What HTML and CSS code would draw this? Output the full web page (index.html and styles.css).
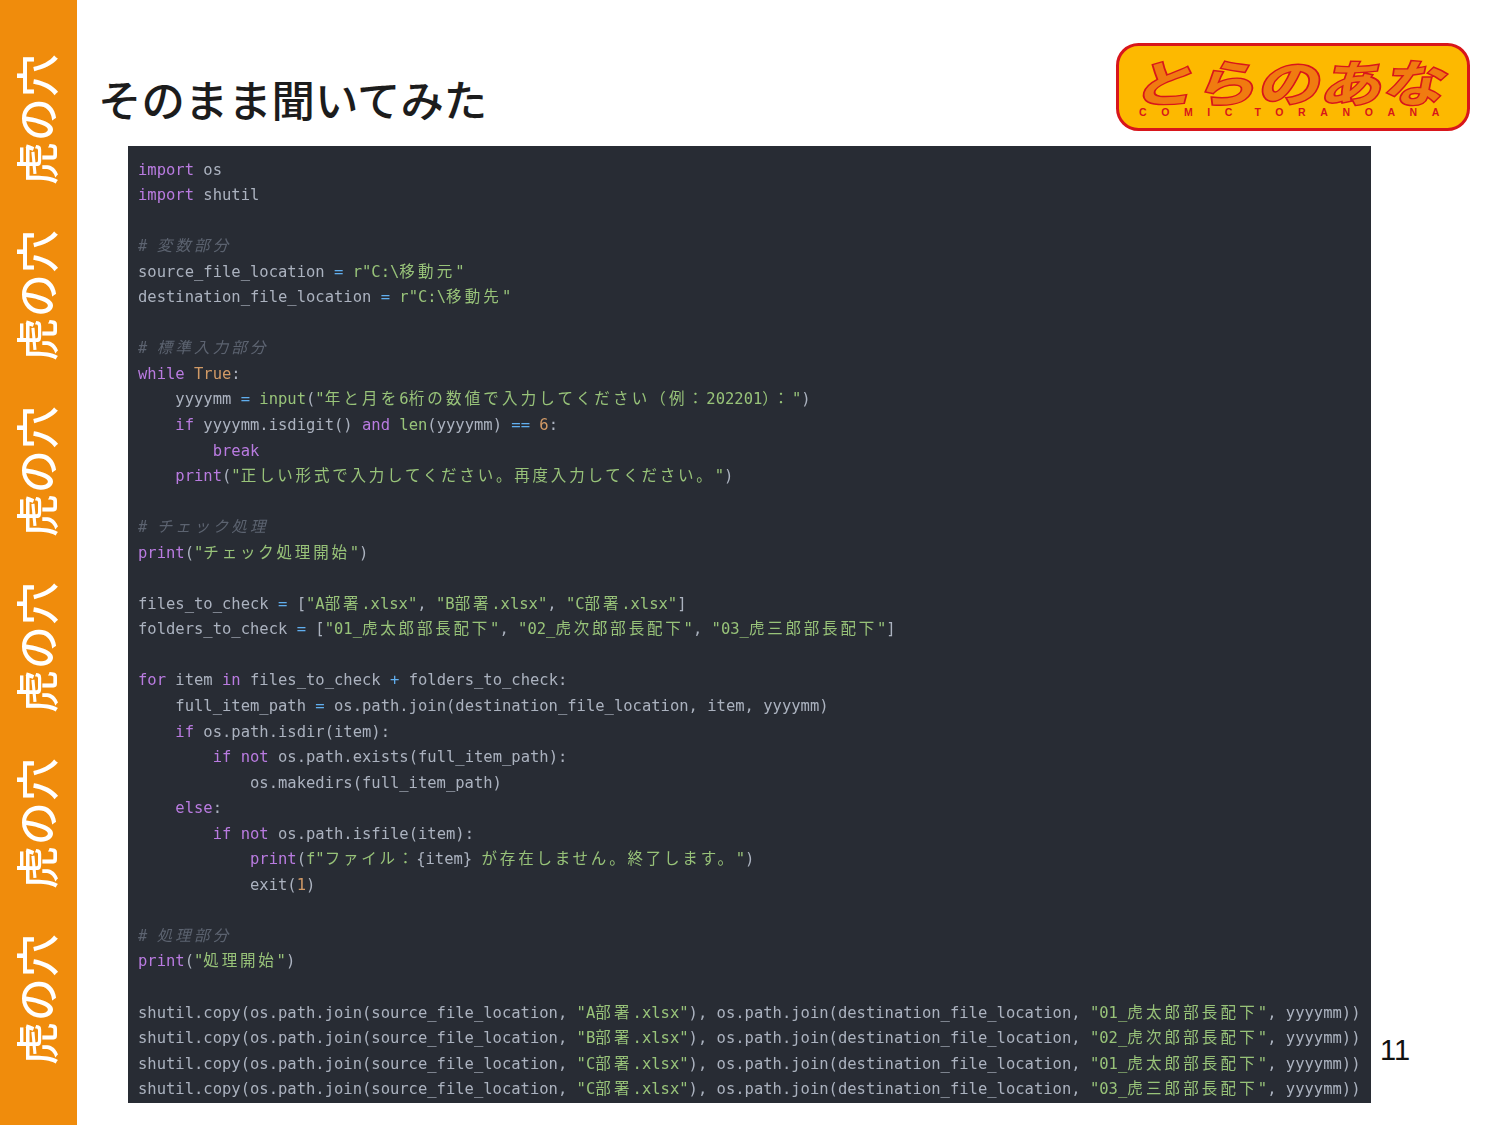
FILE: index.html
```html
<!DOCTYPE html>
<html lang="ja">
<head>
<meta charset="utf-8">
<title>そのまま聞いてみた</title>
<link rel="stylesheet" href="styles.css">
</head>
<body>
<div class="slide">
  <aside class="band">虎の穴　虎の穴　虎の穴　虎の穴　虎の穴　虎の穴</aside>
  <main class="main">
    <header class="head">
      <h1 class="title">そのまま聞いてみた</h1>
      <svg class="logo" viewBox="0 0 354 88" width="354" height="88" role="img" aria-label="とらのあな COMIC TORANOANA">
        <rect class="logo-bg" x="1.5" y="1.5" width="351" height="85" rx="21"/>
        <g transform="translate(10 0) skewX(-14)">
          <text class="logo-main" x="20" y="59" textLength="312" lengthAdjust="spacingAndGlyphs">とらのあな</text>
        </g>
        <text class="logo-sub" x="23" y="73">COMIC TORANOANA</text>
      </svg>
    </header>
    <div class="body">
      <div class="code">
        <div class="ln"><b class="k">import</b> os</div>
        <div class="ln"><b class="k">import</b> shutil</div>
        <div class="ln"></div>
        <div class="ln c"># <span class="j">変数部分</span></div>
        <div class="ln">source_file_location <i class="o">=</i> <u class="s">r"C:\<span class="j">移動元</span>"</u></div>
        <div class="ln">destination_file_location <i class="o">=</i> <u class="s">r"C:\<span class="j">移動先</span>"</u></div>
        <div class="ln"></div>
        <div class="ln c"># <span class="j">標準入力部分</span></div>
        <div class="ln"><b class="k">while</b> <em class="n">True</em>:</div>
        <div class="ln">    yyyymm <i class="o">=</i> <u class="s">input</u>(<u class="s">"<span class="j">年と月を</span>6<span class="j">桁の数値で入力してください（例：</span>202201<span class="j">）：</span>"</u>)</div>
        <div class="ln">    <b class="k">if</b> yyyymm.isdigit() <b class="k">and</b> <u class="s">len</u>(yyyymm) <i class="o">==</i> <em class="n">6</em>:</div>
        <div class="ln">        <b class="k">break</b></div>
        <div class="ln">    <b class="k">print</b>(<u class="s">"<span class="t">正しい形式で入力してください。再度入力してください。</span>"</u>)</div>
        <div class="ln"></div>
        <div class="ln c"># <span class="j">チェック処理</span></div>
        <div class="ln"><b class="k">print</b>(<u class="s">"<span class="t">チェック処理開始</span>"</u>)</div>
        <div class="ln"></div>
        <div class="ln">files_to_check <i class="o">=</i> [<u class="s">"A<span class="t">部署</span>.xlsx"</u>, <u class="s">"B<span class="t">部署</span>.xlsx"</u>, <u class="s">"C<span class="t">部署</span>.xlsx"</u>]</div>
        <div class="ln">folders_to_check <i class="o">=</i> [<u class="s">"01_<span class="t">虎太郎部長配下</span>"</u>, <u class="s">"02_<span class="t">虎次郎部長配下</span>"</u>, <u class="s">"03_<span class="t">虎三郎部長配下</span>"</u>]</div>
        <div class="ln"></div>
        <div class="ln"><b class="k">for</b> item <b class="k">in</b> files_to_check <i class="o">+</i> folders_to_check:</div>
        <div class="ln">    full_item_path <i class="o">=</i> os.path.join(destination_file_location, item, yyyymm)</div>
        <div class="ln">    <b class="k">if</b> os.path.isdir(item):</div>
        <div class="ln">        <b class="k">if</b> <b class="k">not</b> os.path.exists(full_item_path):</div>
        <div class="ln">            os.makedirs(full_item_path)</div>
        <div class="ln">    <b class="k">else</b>:</div>
        <div class="ln">        <b class="k">if</b> <b class="k">not</b> os.path.isfile(item):</div>
        <div class="ln">            <b class="k">print</b>(<u class="s">f"<span class="t">ファイル：</span></u>{item}<u class="s"> <span class="t">が存在しません。終了します。</span>"</u>)</div>
        <div class="ln">            exit(<em class="n">1</em>)</div>
        <div class="ln"></div>
        <div class="ln c"># <span class="j">処理部分</span></div>
        <div class="ln"><b class="k">print</b>(<u class="s">"<span class="t">処理開始</span>"</u>)</div>
        <div class="ln"></div>
        <div class="ln">shutil.copy(os.path.join(source_file_location, <u class="s">"A<span class="j">部署</span>.xlsx"</u>), os.path.join(destination_file_location, <u class="s">"01_<span class="j">虎太郎部長配下</span>"</u>, yyyymm))</div>
        <div class="ln">shutil.copy(os.path.join(source_file_location, <u class="s">"B<span class="j">部署</span>.xlsx"</u>), os.path.join(destination_file_location, <u class="s">"02_<span class="j">虎次郎部長配下</span>"</u>, yyyymm))</div>
        <div class="ln">shutil.copy(os.path.join(source_file_location, <u class="s">"C<span class="j">部署</span>.xlsx"</u>), os.path.join(destination_file_location, <u class="s">"01_<span class="j">虎太郎部長配下</span>"</u>, yyyymm))</div>
        <div class="ln">shutil.copy(os.path.join(source_file_location, <u class="s">"C<span class="j">部署</span>.xlsx"</u>), os.path.join(destination_file_location, <u class="s">"03_<span class="j">虎三郎部長配下</span>"</u>, yyyymm))</div>
      </div>
      <div class="page">11</div>
    </div>
  </main>
</div>
</body>
</html>
```
FILE: styles.css
```css
* { box-sizing: border-box; }
html, body { margin: 0; padding: 0; background: #fff; }
.slide { display: flex; width: 1500px; height: 1125px; overflow: hidden; }

.band {
  flex: 0 0 77px;
  height: 1125px;
  background: #f08c0c;
  color: #fff;
  font: 500 43px/70px "Noto Sans CJK JP", sans-serif;
  letter-spacing: 1px;
  writing-mode: vertical-rl;
  text-orientation: sideways;
  transform: rotate(180deg);
  padding-top: 60px;
  white-space: nowrap;
  overflow: hidden;
}

.main { flex: 1; display: flex; flex-direction: column; min-width: 0; }
.head {
  flex: 0 0 146px;
  display: flex;
  justify-content: space-between;
  padding: 43px 30px 0 21px;
}
.title {
  margin: 0;
  font: 500 43.4px/1 "Noto Sans CJK JP", sans-serif;
  color: #1c1c1c;
  padding-top: 34px;
}
.logo { display: block; flex: none; }
.logo-bg { fill: #fdb900; stroke: #d8161b; stroke-width: 3; }
.logo-main {
  font: 900 50px "Noto Sans CJK JP", sans-serif;
  fill: #f07b10;
  stroke: #d8161b;
  stroke-width: 1.4;
}
.logo-sub {
  font: 700 10.5px "Liberation Sans", sans-serif;
  fill: #d8161b;
  letter-spacing: 14.6px;
  word-spacing: -10px;
}

.body { display: flex; padding-left: 51px; }
.code {
  flex: 0 0 1243px;
  height: 957px;
  overflow: hidden;
  background: #282c34;
  padding: 11.5px 10px 0;
  color: #abb2bf;
  font: 400 15.5px "DejaVu Sans Mono", "Noto Sans CJK JP", monospace;
  filter: blur(0.3px);
}
.ln { height: 25.56px; line-height: 25.56px; white-space: pre; }
.ln b, .ln i, .ln u, .ln em { font-weight: 400; font-style: normal; text-decoration: none; }
.j { letter-spacing: 3.16px; }
.t { letter-spacing: 2.8px; }
.k { color: #b97be0; }
.s { color: #98c379; }
.n { color: #d19a66; }
.o { color: #61afef; }
.c { color: #5c6370; font-style: italic; }
.page {
  align-self: flex-end;
  margin: 0 0 38px 9px;
  font: 400 29px/1 "Liberation Sans", sans-serif;
  color: #111;
}
```
